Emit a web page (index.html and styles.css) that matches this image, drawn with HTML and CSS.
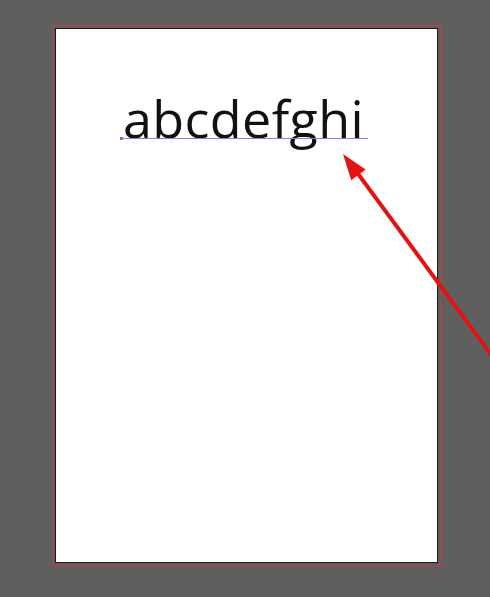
FILE: index.html
```html
<!DOCTYPE html>
<html>
<head>
<meta charset="utf-8">
<link rel="stylesheet" href="styles.css">
</head>
<body>
<div class="workspace">
  <div class="bleed">
    <div class="page">
      <span class="sample">abcdefghi</span>
    </div>
  </div>
</div>
<svg class="arrow" width="490" height="597" viewBox="0 0 490 597">
  <line x1="492" y1="356" x2="356" y2="171" stroke="#e51212" stroke-width="4"/>
  <polygon points="343,154 351.2,180.2 365.6,169.6" fill="#e51212"/>
</svg>
</body>
</html>
```
FILE: styles.css
```css
html, body {
  margin: 0;
  padding: 0;
  background: #5f5f5f;
  width: 490px;
  height: 597px;
  overflow: hidden;
}
.workspace {
  padding: 25px 0 0 52px;
}
.bleed {
  width: 383px;
  height: 535px;
  border: 1px solid #c23a42;
  padding: 2px;
}
.page {
  box-sizing: border-box;
  height: 100%;
  background: #ffffff;
  border: 1px solid #1a1a1a;
  padding: 63px 0 0 67px;
}
.sample {
  position: relative;
  display: inline-block;
  font-family: "Open Sans", sans-serif;
  font-size: 52px;
  font-weight: 500;
  letter-spacing: 0.4px;
  line-height: 52px;
  color: #111111;
}
.sample::after {
  content: "";
  position: absolute;
  left: -2px;
  right: -4px;
  top: 46px;
  height: 1px;
  background: #8585d8;
}
.sample::before {
  content: "";
  position: absolute;
  left: -3px;
  top: 45px;
  width: 3px;
  height: 3px;
  background: #6a6ac8;
}
.arrow {
  position: absolute;
  left: 0;
  top: 0;
}
```
